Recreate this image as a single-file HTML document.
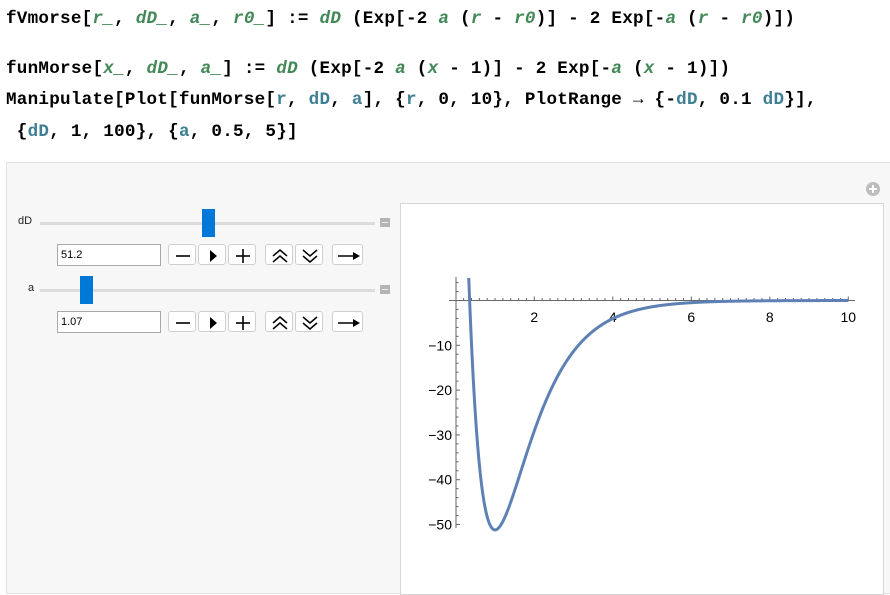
<!DOCTYPE html>
<html><head><meta charset="utf-8"><style>
body{margin:0;width:890px;height:580px;background:#fff;position:relative;overflow:hidden;font-family:"Liberation Sans",sans-serif}
.code{position:absolute;left:6px;font-family:"Liberation Mono",monospace;font-weight:bold;font-size:17.6px;color:#000;white-space:pre;letter-spacing:0.25px}
.g{color:#438958;font-style:italic}
.b{color:#3f7f93}
.panel{position:absolute;left:6px;top:162px;width:890px;height:430px;background:#f7f7f7;border:1px solid #e2e2e2}
.plot{position:absolute;left:400px;top:203px;width:482px;height:390px;background:#fff;border:1px solid #d6d6d6}
.lbl{position:absolute;font-size:11px;color:#222}
.track{position:absolute;height:3px;background:#dcdcdc;left:40px;width:335px}
.thumb{position:absolute;width:13px;height:28px;background:#0078d7}
.mini{position:absolute;left:380px;width:10px;height:9px;background:#b4b4b4}
.mini:after{content:"";position:absolute;left:2px;right:2px;top:4px;height:1px;background:#eee}
.inp{position:absolute;left:57px;width:99px;height:20px;border:1px solid #a8a8a8;background:#fff;font-size:11px;line-height:20px;padding-left:3px;box-sizing:content-box}
.btn{position:absolute;width:27px;height:21px;border:1px solid #cfcfcf;border-radius:3px;background:#fff;box-sizing:border-box}
.btn svg{position:absolute;left:0;top:0}
</style></head><body>
<div class="code" style="top:9px">fVmorse[<span class="g">r_</span>, <span class="g">dD_</span>, <span class="g">a_</span>, <span class="g">r0_</span>] := <span class="g">dD</span> (Exp[-2 <span class="g">a</span> (<span class="g">r</span> - <span class="g">r0</span>)] - 2 Exp[-<span class="g">a</span> (<span class="g">r</span> - <span class="g">r0</span>)])</div>
<div class="code" style="top:59px">funMorse[<span class="g">x_</span>, <span class="g">dD_</span>, <span class="g">a_</span>] := <span class="g">dD</span> (Exp[-2 <span class="g">a</span> (<span class="g">x</span> - 1)] - 2 Exp[-<span class="g">a</span> (<span class="g">x</span> - 1)])</div>
<div class="code" style="top:90px">Manipulate[Plot[funMorse[<span class="b">r</span>, <span class="b">dD</span>, <span class="b">a</span>], {<span class="b">r</span>, 0, 10}, PlotRange → {-<span class="b">dD</span>, 0.1 <span class="b">dD</span>}],</div>
<div class="code" style="top:122px"> {<span class="b">dD</span>, 1, 100}, {<span class="b">a</span>, 0.5, 5}]</div>

<div class="panel"></div>
<svg style="position:absolute;left:865px;top:181px" width="16" height="16"><circle cx="8" cy="8" r="7" fill="#bdbdbd"/><rect x="4" y="7" width="8" height="2" fill="#fff"/><rect x="7" y="4" width="2" height="8" fill="#fff"/></svg>

<div class="lbl" style="left:18px;top:215px">dD</div>
<div class="track" style="top:222px"></div>
<div class="thumb" style="left:202px;top:209px"></div>
<div class="mini" style="top:218px"></div>
<div class="inp" style="top:244px">51.2</div>

<div class="lbl" style="left:28px;top:282px">a</div>
<div class="track" style="top:289px"></div>
<div class="thumb" style="left:80px;top:276px"></div>
<div class="mini" style="top:285px"></div>
<div class="inp" style="top:311px">1.07</div>

<div id="btns"></div>

<div class="plot"></div>
<svg id="pl" style="position:absolute;left:0;top:0" width="890" height="580"></svg>
<script>
(function(){
var bs=[[168,'m'],[198,'p'],[228,'+'],[265,'u'],[295,'d'],[332,'r']];
var html='';
[244,311].forEach(function(t){
bs.forEach(function(b){
var w=b[1]=='r'?31:28, s='';
if(b[1]=='m')s='<line x1="7" y1="11" x2="21" y2="11" stroke="#000" stroke-width="1.6"/>';
if(b[1]=='p')s='<polygon points="11,5 18,11 11,17" fill="#000"/>';
if(b[1]=='+')s='<line x1="7" y1="11" x2="21" y2="11" stroke="#000" stroke-width="1.6"/><line x1="14" y1="4" x2="14" y2="18" stroke="#000" stroke-width="1.6"/>';
if(b[1]=='u')s='<polyline points="7,11 14,5 21,11" fill="none" stroke="#000" stroke-width="1.5"/><polyline points="7,17 14,11 21,17" fill="none" stroke="#000" stroke-width="1.5"/>';
if(b[1]=='d')s='<polyline points="7,5 14,11 21,5" fill="none" stroke="#000" stroke-width="1.5"/><polyline points="7,11 14,17 21,11" fill="none" stroke="#000" stroke-width="1.5"/>';
if(b[1]=='r')s='<line x1="5" y1="11" x2="22" y2="11" stroke="#000" stroke-width="1.6"/><polygon points="20,7 27,11 20,15" fill="#000"/>';
html+='<div class="btn" style="left:'+b[0]+'px;top:'+t+'px;width:'+w+'px"><svg width="'+w+'" height="22">'+s+'</svg></div>';
});});
document.getElementById('btns').innerHTML=html;

var X0=455.8,SX=39.25,Y0=300.5,SY=4.48;
function px(x){return X0+x*SX}function py(y){return Y0-y*SY}
var s='';
s+='<line x1="449" y1="300.5" x2="855" y2="300.5" stroke="#666" stroke-width="1"/>';
s+='<line x1="456" y1="277" x2="456" y2="528" stroke="#666" stroke-width="1"/>';
for(var i=1;i<=50;i++){var x=i*0.2;var xx=px(x);var L=(i%10==0)?4:2.5;s+='<line x1="'+xx+'" y1="'+(300.5-L)+'" x2="'+xx+'" y2="300.5" stroke="#666"/>';}
for(var j=-51;j<=5;j++){ if(j==0)continue; if(j%2!=0 && j%10!=0)continue; var yy=py(j);var L=(j%10==0)?4:2.5;s+='<line x1="456" y1="'+yy+'" x2="'+(456+L)+'" y2="'+yy+'" stroke="#666"/>';}
[2,4,6,8,10].forEach(function(v){s+='<text x="'+px(v)+'" y="322" font-size="14" text-anchor="middle" font-family="Liberation Sans" fill="#000">'+v+'</text>';});
[-10,-20,-30,-40,-50].forEach(function(v){s+='<text x="452" y="'+(py(v)+5)+'" font-size="14" text-anchor="end" font-family="Liberation Sans" fill="#000">\u2212'+(-v)+'</text>';});
var d='',first=true;
for(var k=0;k<=10000;k++){var x=k*0.001;var e=Math.exp(-1.07*(x-1));var y=51.2*(e*e-2*e);if(y>5.12)continue;d+=(first?'M':'L')+px(x).toFixed(2)+','+py(y).toFixed(2);first=false;}
s+='<path d="'+d+'" fill="none" stroke="#5e81b5" stroke-width="3"/>';
document.getElementById('pl').innerHTML=s;
})();
</script>
</body></html>
